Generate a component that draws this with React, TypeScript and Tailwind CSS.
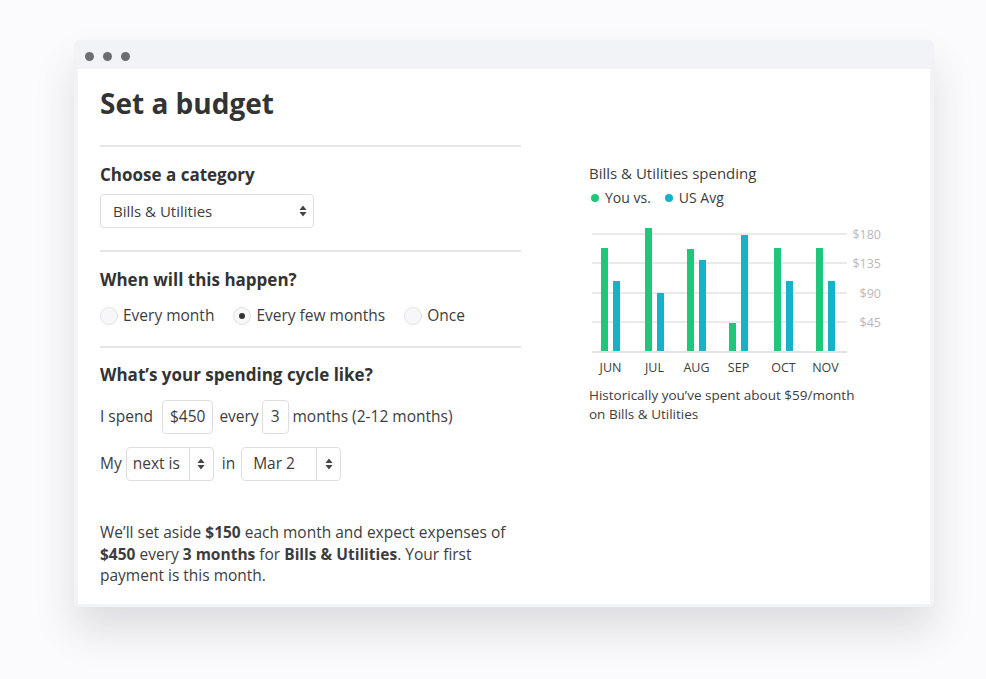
import React from "react";

const font = { fontFamily: "'Open Sans', 'Noto Sans', sans-serif" };

const bars = [
  { m: "JUN", you: 248, us: 281 },
  { m: "JUL", you: 228, us: 293 },
  { m: "AUG", you: 249, us: 260 },
  { m: "SEP", you: 323, us: 235 },
  { m: "OCT", you: 248, us: 281 },
  { m: "NOV", you: 248, us: 281 },
];
const barX = [601, 645, 687, 729, 774, 816];

const Arrows = () => (
  <svg width="8" height="12" viewBox="0 0 8 12" className="fill-[#444]">
    <path d="M4 0.5 L7.5 5 H0.5 Z" />
    <path d="M4 11.5 L7.5 7 H0.5 Z" />
  </svg>
);

const Radio = ({ checked, label }: { checked?: boolean; label: string }) => (
  <div className="flex items-center">
    <span className="w-[18px] h-[18px] rounded-full border border-[#e2e2e6] bg-[#f7f7f9] flex items-center justify-center">
      {checked && <span className="w-[6px] h-[6px] rounded-full bg-[#333]" />}
    </span>
    <span className="ml-[5px]">{label}</span>
  </div>
);

const Divider = () => <div className="h-[2px] bg-[#e6e6e8]" />;

function Chart() {
  const ox = 589;
  const oy = 220;
  const grid = [234, 263, 293, 322];
  const labels = ["$180", "$135", "$90", "$45"];
  return (
    <svg width="300" height="160" viewBox={`${ox} ${oy} 300 160`} className="block">
      {grid.map((y, i) => (
        <g key={y}>
          <line x1={592} x2={847} y1={y} y2={y} stroke="#e3e3e5" strokeWidth="1.5" />
          <text x={881} y={y + 4.5} fontSize="12.5" fill="#b9b9bd" textAnchor="end" style={font}>
            {labels[i]}
          </text>
        </g>
      ))}
      {bars.map((b, i) => (
        <g key={b.m}>
          <rect x={barX[i]} y={b.you} width="7" height={352 - b.you} fill="#1fc77a" />
          <rect x={barX[i] + 12} y={b.us} width="7" height={352 - b.us} fill="#16b3c8" />
          <text x={barX[i] + 9.5} y={372} fontSize="12.5" fill="#3d3d3d" textAnchor="middle" style={font}>
            {b.m}
          </text>
        </g>
      ))}
      <line x1={592} x2={847} y1={352} y2={352} stroke="#e3e3e5" strokeWidth="2" />
    </svg>
  );
}

export default function App() {
  return (
    <div className="w-[986px] h-[679px] bg-[#fbfbfd] pt-[40px] pl-[74px] text-[#3d3d3d]" style={font}>
      <div className="w-[860px] h-[567px] bg-[#f2f3f7] rounded-[5px] pt-[29px] px-[4px] pb-[3px] flex flex-col shadow-[0_24px_40px_rgba(40,40,60,0.14)]">
        <div className="flex-1 bg-white flex pl-[22px] relative">
          <div className="absolute -top-[17px] left-[7px] flex gap-[9px]">
            <span className="w-[9px] h-[9px] rounded-full bg-[#6d6e75]" />
            <span className="w-[9px] h-[9px] rounded-full bg-[#6d6e75]" />
            <span className="w-[9px] h-[9px] rounded-full bg-[#6d6e75]" />
          </div>
          <div className="w-[421px] flex flex-col pt-[17px]">
            <h1 className="text-[28px] leading-[34px] font-bold text-[#333]">Set a budget</h1>
            <div className="mt-[25px]"><Divider /></div>

            <h2 className="mt-[17px] text-[17px] leading-[22px] font-bold text-[#333]">Choose a category</h2>
            <div className="mt-[8px] w-[214px] h-[34px] border border-[#dedee2] rounded-[4px] flex items-center justify-between pl-[12px] pr-[6px] text-[15px]">
              <span>Bills &amp; Utilities</span>
              <Arrows />
            </div>
            <div className="mt-[22px]"><Divider /></div>

            <h2 className="mt-[17px] text-[17px] leading-[22px] font-bold text-[#333]">When will this happen?</h2>
            <div className="mt-[15px] h-[20px] flex items-center text-[15.5px]">
              <Radio label="Every month" />
              <div className="ml-[19px]"><Radio checked label="Every few months" /></div>
              <div className="ml-[19px]"><Radio label="Once" /></div>
            </div>
            <div className="mt-[20px]"><Divider /></div>

            <h2 className="mt-[16px] text-[17px] leading-[22px] font-bold text-[#333]">What’s your spending cycle like?</h2>
            <div className="mt-[14px] flex items-center text-[15.5px] h-[34px]">
              <span>I spend</span>
              <span className="ml-[9px] h-[34px] px-[7px] border border-[#dedee2] rounded-[4px] flex items-center">$450</span>
              <span className="ml-[6px]">every</span>
              <span className="ml-[3px] h-[34px] px-[8px] border border-[#dedee2] rounded-[4px] flex items-center">3</span>
              <span className="ml-[4px]">months (2-12 months)</span>
            </div>
            <div className="mt-[13px] flex items-center text-[15.5px] h-[34px]">
              <span>My</span>
              <div className="ml-[4px] h-[34px] w-[88px] border border-[#dedee2] rounded-[4px] flex">
                <span className="w-[63px] border-r border-[#dedee2] flex items-center pl-[6px]">next is</span>
                <span className="flex-1 flex items-center justify-center"><Arrows /></span>
              </div>
              <span className="ml-[8px]">in</span>
              <div className="ml-[6px] h-[34px] w-[100px] border border-[#dedee2] rounded-[4px] flex">
                <span className="w-[75px] border-r border-[#dedee2] flex items-center pl-[11px]">Mar 2</span>
                <span className="flex-1 flex items-center justify-center"><Arrows /></span>
              </div>
            </div>

            <p className="mt-[41px] text-[15.5px] leading-[21.5px]">
              We’ll set aside <b>$150</b> each month and expect expenses of <b>$450</b> every <b>3 months</b> for{" "}
              <b>Bills &amp; Utilities</b>. Your first payment is this month.
            </p>
          </div>

          <div className="ml-[68px] pt-[94px] flex flex-col">
            <div className="text-[15px] leading-[20px]">Bills &amp; Utilities spending</div>
            <div className="mt-[5px] flex items-center text-[14px] leading-[20px]">
              <span className="w-[8px] h-[8px] rounded-full bg-[#1fc77a] ml-[2px]" />
              <span className="ml-[6px]">You vs.</span>
              <span className="w-[8px] h-[8px] rounded-full bg-[#16b3c8] ml-[14px]" />
              <span className="ml-[6px]">US Avg</span>
            </div>
            <div className="mt-[12px]">
              <Chart />
            </div>
            <p className="mt-[6px] text-[13.5px] leading-[19px] w-[280px]">
              Historically you’ve spent about $59/month on Bills &amp; Utilities
            </p>
          </div>
        </div>
      </div>
    </div>
  );
}
